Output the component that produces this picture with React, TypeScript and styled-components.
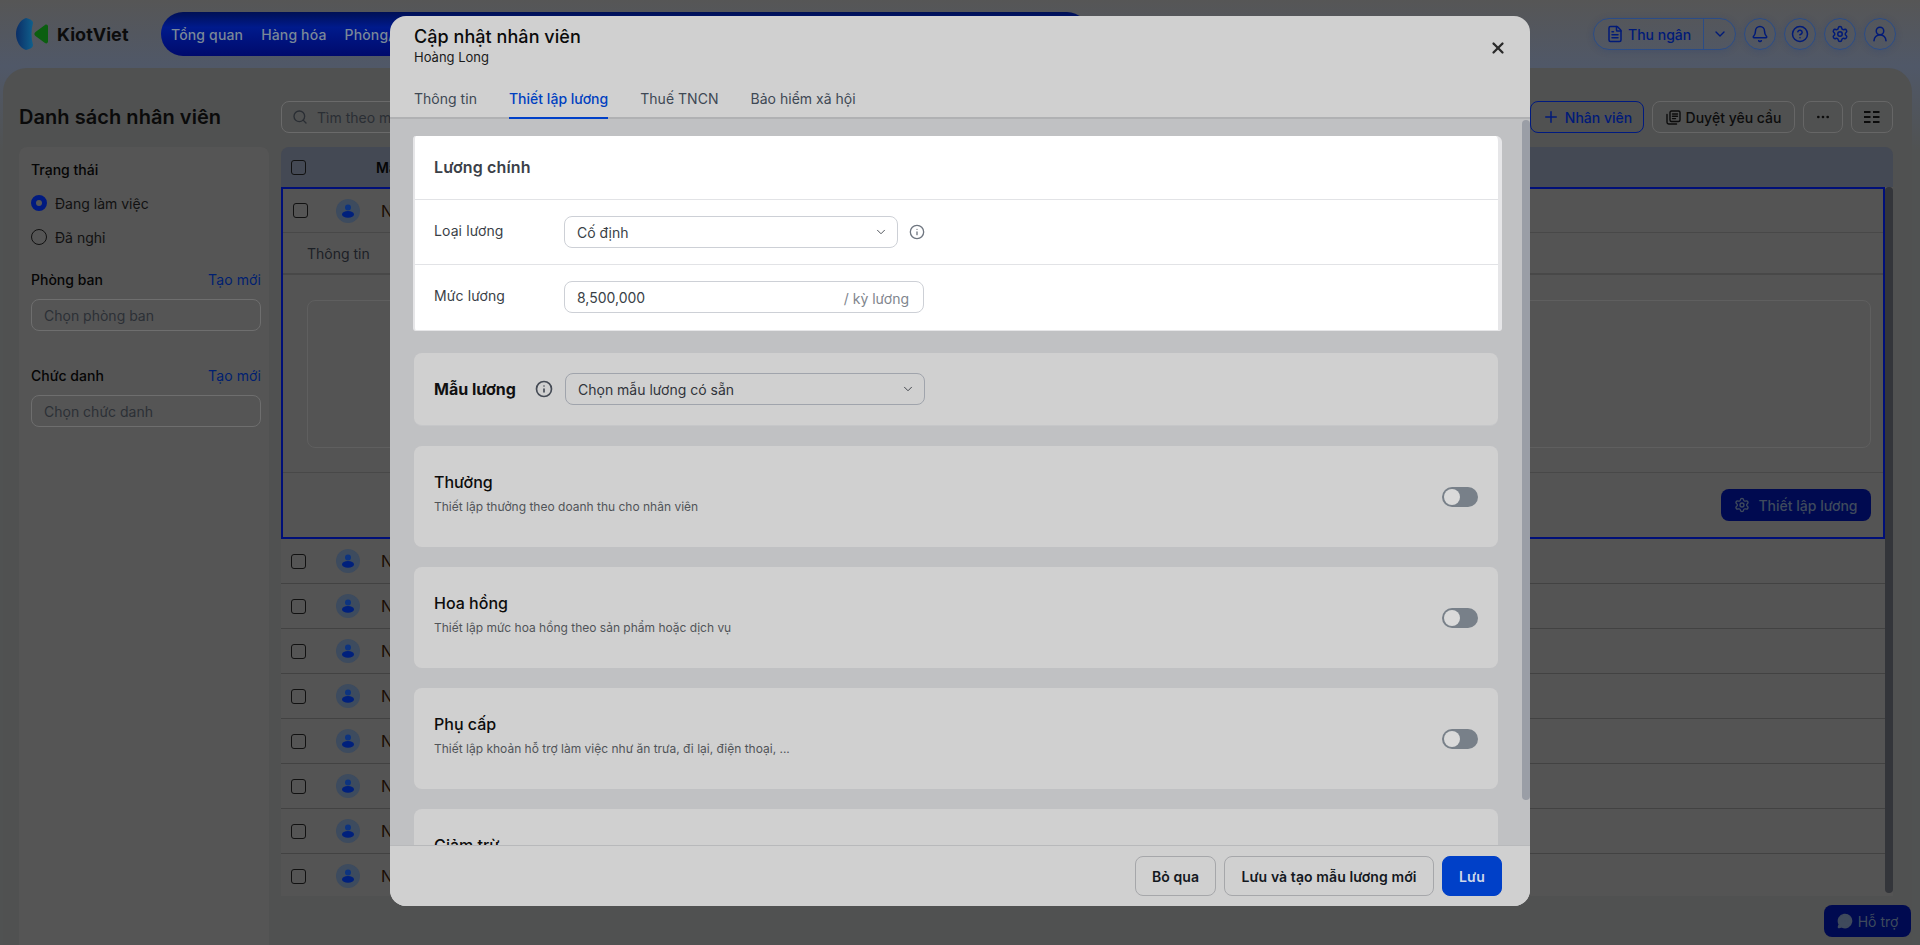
import React from 'react';
import styled, { createGlobalStyle } from 'styled-components';
import {
  Search, Plus, MoreHorizontal, ChevronDown, Bell, CircleHelp, Settings, UserRound, X, Info, FileText, MessageCircleMore,
} from 'lucide-react';

const Global = createGlobalStyle`
  html, body { margin: 0; padding: 0; height: 945px; overflow: hidden; background: #505252; }
  body { font-family: Inter, "Noto Sans", sans-serif; color: #0a0a0a; font-size: 14px; }
  * { box-sizing: border-box; }
`;

const Page = styled.div`
  position: relative;
  width: 1920px;
  height: 945px;
  overflow: hidden;
  display: flex;
  flex-direction: column;
  background: linear-gradient(180deg, #565656 0, #505868 66px, #505252 150px);
`;

const TopBar = styled.header`
  flex: none;
  height: 68px;
  display: flex;
  align-items: flex-start;
  padding: 12px 24px 0 16px;
`;
const Logo = styled.div`
  display: flex;
  align-items: center;
  width: 145px;
  height: 44px;
  gap: 9px;
  font-size: 18px;
  font-weight: 700;
  color: #0c0c0c;
  letter-spacing: 0.05px;
`;
const NavPill = styled.nav`
  width: 928px;
  height: 44px;
  border-radius: 22px;
  background: linear-gradient(180deg, #001055 0, #001a8c 35%, #000a6c 100%);
  display: flex;
  align-items: center;
  gap: 18px;
  padding-left: 10px;
  font-size: 14px;
  font-weight: 500;
  letter-spacing: 0.15px;
  color: #7a8898;
`;
const TopRight = styled.div`
  margin-left: auto;
  margin-top: 6px;
  display: flex;
  align-items: center;
  gap: 8px;
`;
const Cashier = styled.div`
  display: flex;
  height: 32px;
  width: 143px;
  border: 1px solid #2b4c86;
  border-radius: 16px;
  color: #001a78;
  font-size: 14px;
  font-weight: 500;
  box-shadow: 0 1px 6px rgba(30, 60, 120, .25);
`;
const CashierMain = styled.div`
  flex: 1;
  display: flex;
  align-items: center;
  gap: 4px;
  padding-left: 12px;
  border-right: 1px solid #2b4c86;
`;
const CashierArrow = styled.div`
  width: 31px;
  display: flex;
  align-items: center;
  justify-content: center;
`;
const RoundBtn = styled.div`
  width: 32px;
  height: 32px;
  border-radius: 50%;
  border: 1px solid #2b4c86;
  color: #001a78;
  display: flex;
  align-items: center;
  justify-content: center;
  box-shadow: 0 1px 6px rgba(30, 60, 120, .25);
`;

const Panel = styled.main`
  flex: 1;
  min-height: 0;
  margin: 0 8px 0 3px;
  padding: 33px 19px 0 16px;
  background: #505151;
  border-radius: 24px 24px 0 0;
  display: flex;
  flex-direction: column;
`;
const Toolbar = styled.div`
  height: 32px;
  flex: none;
  display: flex;
  align-items: center;
  gap: 8px;
`;
const PageTitle = styled.h1`
  margin: 0;
  width: 254px;
  font-size: 20px;
  line-height: 28px;
  font-weight: 600;
  letter-spacing: 0.05px;
  color: #0a0a0a;
`;
const SearchBox = styled.div`
  flex: 1;
  height: 32px;
  border: 1px solid #6a6a6a;
  border-radius: 8px;
  display: flex;
  align-items: center;
  gap: 9px;
  padding-left: 10px;
  color: #2a2e34;
`;
const ToolBtn = styled.div<{ $w: number; $primary?: boolean }>`
  width: ${p => p.$w}px;
  height: 32px;
  flex: none;
  border: 1px solid ${p => (p.$primary ? '#001a80' : '#666')};
  border-radius: 8px;
  display: flex;
  align-items: center;
  justify-content: center;
  gap: 5px;
  font-size: 14px;
  font-weight: 500;
  color: ${p => (p.$primary ? '#001a78' : '#0c0c0c')};
`;
const Columns = styled.div`
  flex: 1;
  min-height: 0;
  margin-top: 14px;
  display: flex;
  gap: 12px;
`;
const Sidebar = styled.aside`
  width: 250px;
  flex: none;
  padding: 12px 8px 12px 12px;
  border-radius: 8px 8px 0 0;
  background: #555;
  display: flex;
  flex-direction: column;
`;
const FilterHead = styled.div`
  display: flex;
  justify-content: space-between;
  align-items: center;
  height: 20px;
  font-weight: 500;
  font-size: 14px;
  color: #050505;
`;
const CreateLink = styled.span`
  color: #001f70;
  font-weight: 400;
  letter-spacing: 0.1px;
`;
const RadioRow = styled.div`
  display: flex;
  align-items: center;
  gap: 8px;
  height: 20px;
  margin-top: 14px;
  color: #111;
`;
const Radio = styled.span<{ $on?: boolean }>`
  width: 16px;
  height: 16px;
  border-radius: 50%;
  background: ${p => (p.$on ? '#001a80' : 'transparent')};
  border: ${p => (p.$on ? '5px solid #001a80' : '1px solid #111')};
  &::after {
    content: '';
    display: ${p => (p.$on ? 'block' : 'none')};
    width: 6px;
    height: 6px;
    border-radius: 50%;
    background: #555;
  }
`;
const FilterSelect = styled.div`
  height: 32px;
  margin-top: 10px;
  border: 1px solid #6e6e6e;
  border-radius: 8px;
  padding-left: 12px;
  display: flex;
  align-items: center;
  color: #2c3036;
`;
const FilterGroup = styled.div<{ $top: number }>`
  margin-top: ${p => p.$top}px;
`;

const Table = styled.section`
  flex: 1;
  min-width: 0;
  display: flex;
  flex-direction: column;
  height: 749px;
  position: relative;
`;
const TableHead = styled.div`
  height: 40px;
  flex: none;
  background: #444954;
  border-radius: 8px 8px 0 0;
  display: flex;
  align-items: center;
  padding-left: 10px;
  font-weight: 600;
  color: #050505;
`;
const Check = styled.span`
  width: 15px;
  height: 15px;
  flex: none;
  border: 1px solid #111;
  border-radius: 3px;
`;
const ExpandedCheck = styled(Check)`
  margin-right: -2px;
`;
const HeadLabel = styled.span`
  margin-left: 70px;
`;
const TableBody = styled.div`
  flex: 1;
  min-height: 0;
  overflow: hidden;
  position: relative;
  padding-right: 8px;
  display: flex;
  flex-direction: column;
  background: #545454;
`;
const Scroll = styled.div`
  position: absolute;
  top: 0;
  right: 0;
  bottom: 3px;
  width: 8px;
  border-radius: 4px;
  background: #33353a;
`;
const Expanded = styled.div`
  height: 352px;
  flex: none;
  border: 2px solid #000f78;
  display: flex;
  flex-direction: column;
`;
const Row = styled.div<{ $plain?: boolean }>`
  height: ${p => (p.$plain ? 45 : 44)}px;
  flex: none;
  display: flex;
  align-items: center;
  padding-left: 10px;
  border-bottom: 1px solid ${p => (p.$plain ? '#424242' : '#484848')};
  color: #1a0c02;
  font-size: 16px;
`;
const Avatar = styled.span`
  width: 24px;
  height: 24px;
  margin-left: 30px;
  flex: none;
  border-radius: 50%;
  background: #3d4b5e;
  color: #00207c;
  display: flex;
  align-items: center;
  justify-content: center;
`;
const RowCode = styled.span`
  margin-left: 21px;
`;
const InnerTabs = styled.div`
  height: 42px;
  flex: none;
  display: flex;
  align-items: center;
  padding-left: 24px;
  border-bottom: 2px solid #484848;
  color: #1c2026;
`;
const InnerBody = styled.div`
  flex: 1;
  padding: 25px 12px 24px 24px;
  border-bottom: 1px solid #484848;
`;
const Dashed = styled.div`
  height: 100%;
  border: 1px solid #5f5f5f;
  border-radius: 8px;
`;
const InnerFoot = styled.div`
  height: 64px;
  flex: none;
  display: flex;
  align-items: center;
  justify-content: flex-end;
  padding-right: 12px;
`;
const SetupBtn = styled.div`
  width: 150px;
  height: 32px;
  border-radius: 8px;
  background: #000a50;
  color: #3f4a5c;
  display: flex;
  align-items: center;
  justify-content: center;
  gap: 8px;
  font-weight: 500;
`;
const Support = styled.div`
  position: absolute;
  left: 1824px;
  top: 905px;
  width: 87px;
  height: 32px;
  border-radius: 8px;
  background: #000a50;
  color: #3f4a5c;
  display: flex;
  align-items: center;
  justify-content: center;
  gap: 5px;
  font-size: 14px;
`;

const Modal = styled.div`
  position: absolute;
  left: 390px;
  top: 16px;
  width: 1140px;
  height: 890px;
  border-radius: 16px;
  overflow: hidden;
  background: #d0d0d0;
  display: flex;
  flex-direction: column;
`;
const ModalHead = styled.div`
  height: 62px;
  flex: none;
  padding: 8px 24px 0;
  position: relative;
`;
const ModalTitle = styled.h2`
  margin: 0;
  font-size: 18px;
  line-height: 25px;
  font-weight: 500;
  letter-spacing: 0.05px;
  color: #0a0a0a;
`;
const ModalSub = styled.div`
  font-size: 13px;
  line-height: 16px;
  color: #1a1a1a;
`;
const Close = styled.span`
  position: absolute;
  right: 23px;
  top: 23px;
  display: flex;
  color: #2a2a2a;
`;
const Tabs = styled.div`
  height: 41px;
  flex: none;
  display: flex;
  gap: 32px;
  padding: 0 24px;
  border-bottom: 2px solid #b0b1b3;
`;
const Tab = styled.div<{ $on?: boolean }>`
  height: 41px;
  padding-top: 12px;
  font-size: 14px;
  line-height: 18px;
  letter-spacing: 0.02px;
  font-weight: ${p => (p.$on ? 500 : 400)};
  color: ${p => (p.$on ? '#0040c0' : '#3e4854')};
  border-bottom: 2px solid ${p => (p.$on ? '#0040c8' : 'transparent')};
`;
const ModalBody = styled.div`
  flex: 1;
  min-height: 0;
  overflow: hidden;
  background: #c0c1c3;
  padding: 17px 32px 0 24px;
  position: relative;
  display: flex;
  flex-direction: column;
  gap: 20px;
`;
const ModalThumb = styled.div`
  position: absolute;
  right: 0;
  top: 1px;
  width: 8px;
  height: 680px;
  border-radius: 4px;
  background: #9a9ea6;
`;
const MainCard = styled.section`
  flex: none;
  height: 195px;
  margin: 0 -4px 2px -1px;
  background: #fff;
  border-style: solid;
  border-color: #e6e6e8;
  border-width: 0 4px 1px 2px;
  border-radius: 3px 6px 3px 3px;
  display: flex;
  flex-direction: column;
`;
const MainHead = styled.div`
  height: 64px;
  flex: none;
  display: flex;
  align-items: center;
  padding: 0 0 1px 19px;
  font-size: 16px;
  font-weight: 600;
  letter-spacing: 0.15px;
  color: #3b4048;
  border-bottom: 1px solid #e2e3e6;
`;
const MainRow = styled.div<{ $last?: boolean }>`
  height: ${p => (p.$last ? 64 : 65)}px;
  flex: none;
  display: flex;
  align-items: center;
  padding-left: 19px;
  border-bottom: ${p => (p.$last ? 'none' : '1px solid #e2e3e6')};
`;
const FieldLabel = styled.span`
  width: 130px;
  flex: none;
  padding-bottom: 3px;
  color: #3a3f47;
  font-size: 14px;
  letter-spacing: 0.1px;
`;
const Field = styled.div<{ $w: number; $dim?: boolean }>`
  width: ${p => p.$w}px;
  height: 32px;
  flex: none;
  border: 1px solid ${p => (p.$dim ? '#a0a4ac' : '#cdd0d6')};
  border-radius: 8px;
  display: flex;
  align-items: center;
  justify-content: space-between;
  padding: 0 9px 0 12px;
  font-size: 14px;
  color: ${p => (p.$dim ? '#30343b' : '#3a3f47')};
`;
const Unit = styled.span`
  color: #80858d;
  padding: 2px 5px 0 0;
`;
const InfoWrap = styled.span<{ $color: string; $left: number }>`
  display: flex;
  margin-left: ${p => p.$left}px;
  color: ${p => p.$color};
`;
const TemplateCard = styled.section`
  flex: none;
  height: 73px;
  border-radius: 8px;
  background: #d0d0d0;
  border-bottom: 1px solid #c6c7c9;
  display: flex;
  align-items: center;
  padding-left: 20px;
`;
const TemplateLabel = styled.span`
  font-size: 16px;
  font-weight: 700;
  color: #101010;
  width: 101px;
  flex: none;
`;
const SettingCard = styled.section`
  flex: none;
  height: 101px;
  border-radius: 8px;
  background: #d0d0d0;
  padding: 24px 20px 0;
  position: relative;
`;
const SettingTitle = styled.div`
  font-size: 16px;
  line-height: 24px;
  font-weight: 500;
  color: #0c0c0c;
`;
const SettingDesc = styled.div`
  margin-top: 5px;
  font-size: 12px;
  line-height: 16px;
  color: #505458;
`;
const Toggle = styled.span`
  position: absolute;
  right: 20px;
  top: 41px;
  width: 36px;
  height: 20px;
  border-radius: 10px;
  background: #788089;
  padding: 2px;
  display: flex;
  &::before {
    content: '';
    width: 16px;
    height: 16px;
    border-radius: 50%;
    background: #dadada;
  }
`;
const ModalFoot = styled.div`
  height: 61px;
  flex: none;
  border-top: 1px solid #b8b9bb;
  background: #d0d0d0;
  padding: 10px 28px 0 0;
  display: flex;
  justify-content: flex-end;
  gap: 8px;
`;
const FootBtn = styled.div<{ $w: number; $primary?: boolean }>`
  width: ${p => p.$w}px;
  height: 40px;
  border-radius: 8px;
  border: 1px solid ${p => (p.$primary ? '#0040c8' : '#a6a7aa')};
  background: ${p => (p.$primary ? '#0040c8' : 'transparent')};
  color: ${p => (p.$primary ? '#d0d8e8' : '#14181e')};
  display: flex;
  align-items: center;
  justify-content: center;
  font-size: 14px;
  font-weight: 600;
  letter-spacing: 0.1px;
`;

const PersonIcon = () => (
  <svg width="16" height="16" viewBox="0 0 16 16" fill="currentColor">
    <circle cx="8" cy="4.4" r="3" fill="#0d3480" />
    <ellipse cx="8" cy="11.4" rx="6" ry="3.4" />
  </svg>
);
const LogoMark = () => (
  <svg width="32" height="32" viewBox="0 0 32 32">
    <defs>
      <linearGradient id="lg" x1="0" y1="0" x2="1" y2="0">
        <stop offset="0" stopColor="#0b2e66" />
        <stop offset="1" stopColor="#0f5f8c" />
      </linearGradient>
    </defs>
    <path d="M10 0C4 2 0 9 0 16s4 14 10 16c5-1 7-3 7-5C15 20 15 12 17 5 17 3 15 1 10 0Z" fill="url(#lg)" />
    <path d="M32 8.500v15c0 1.500-1.500 2.500-3 1.500L19.500 18c-1.500-1-1.500-3 0-4L29 7c1.500-1 3 0 3 1.500Z" fill="#0b5f10" />
  </svg>
);
const GridIcon = () => (
  <svg width="16" height="14" viewBox="0 0 16 14" fill="#0c0c0c">
    <rect x="0" y="1" width="6.500" height="2" /><rect x="9" y="1" width="6.500" height="2" />
    <rect x="0" y="6" width="6.500" height="2" /><rect x="9" y="6" width="6.500" height="2" />
    <rect x="0" y="11" width="6.500" height="2" /><rect x="9" y="11" width="6.500" height="2" />
  </svg>
);
const ApprovalIcon = () => (
  <svg width="15" height="15" viewBox="0 0 15 15" fill="none" stroke="#0c0c0c" strokeWidth="1.4" strokeLinecap="round" strokeLinejoin="round">
    <rect x="4" y="1" width="10" height="10.500" rx="1.500" />
    <path d="M6.500 4h5M6.500 6.300h5M6.500 8.600h3" />
    <path d="M1 4.500v7.800c0 1 .7 1.700 1.700 1.700h7.800" />
  </svg>
);

const settings = [
  ['Thưởng', 'Thiết lập thưởng theo doanh thu cho nhân viên'],
  ['Hoa hồng', 'Thiết lập mức hoa hồng theo sản phẩm hoặc dịch vụ'],
  ['Phụ cấp', 'Thiết lập khoản hỗ trợ làm việc như ăn trưa, đi lại, điện thoại, ...'],
];

export default function App() {
  return (
    <Page>
      <Global />
      <TopBar>
        <Logo><LogoMark />KiotViet</Logo>
        <NavPill>
          <span>Tổng quan</span>
          <span>Hàng hóa</span>
          <span>Phòng/Bàn</span>
        </NavPill>
        <TopRight>
          <Cashier>
            <CashierMain><FileText size={18} />Thu ngân</CashierMain>
            <CashierArrow><ChevronDown size={16} /></CashierArrow>
          </Cashier>
          <RoundBtn><Bell size={18} /></RoundBtn>
          <RoundBtn><CircleHelp size={18} /></RoundBtn>
          <RoundBtn><Settings size={18} /></RoundBtn>
          <RoundBtn><UserRound size={18} /></RoundBtn>
        </TopRight>
      </TopBar>
      <Panel>
        <Toolbar>
          <PageTitle>Danh sách nhân viên</PageTitle>
          <SearchBox><Search size={16} />Tìm theo mã, tên nhân viên</SearchBox>
          <ToolBtn $w={114} $primary><Plus size={18} />Nhân viên</ToolBtn>
          <ToolBtn $w={143}><ApprovalIcon />Duyệt yêu cầu</ToolBtn>
          <ToolBtn $w={40}><MoreHorizontal size={16} /></ToolBtn>
          <ToolBtn $w={42}><GridIcon /></ToolBtn>
        </Toolbar>
        <Columns>
          <Sidebar>
            <FilterHead>Trạng thái</FilterHead>
            <RadioRow><Radio $on />Đang làm việc</RadioRow>
            <RadioRow><Radio />Đã nghỉ</RadioRow>
            <FilterGroup $top={22}>
              <FilterHead>Phòng ban<CreateLink>Tạo mới</CreateLink></FilterHead>
              <FilterSelect>Chọn phòng ban</FilterSelect>
            </FilterGroup>
            <FilterGroup $top={34}>
              <FilterHead>Chức danh<CreateLink>Tạo mới</CreateLink></FilterHead>
              <FilterSelect>Chọn chức danh</FilterSelect>
            </FilterGroup>
          </Sidebar>
          <Table>
            <TableHead><Check /><HeadLabel>Mã nhân viên</HeadLabel></TableHead>
            <TableBody>
              <Expanded>
                <Row><ExpandedCheck /><Avatar><PersonIcon /></Avatar><RowCode>NV000001</RowCode></Row>
                <InnerTabs>Thông tin</InnerTabs>
                <InnerBody><Dashed /></InnerBody>
                <InnerFoot><SetupBtn><Settings size={16} />Thiết lập lương</SetupBtn></InnerFoot>
              </Expanded>
              {[2, 3, 4, 5, 6, 7, 8, 9].map(n => (
                <Row key={n} $plain><Check /><Avatar><PersonIcon /></Avatar><RowCode>NV00000{n}</RowCode></Row>
              ))}
              <Scroll />
            </TableBody>
          </Table>
        </Columns>
      </Panel>
      <Support><MessageCircleMore size={16} fill="#3f4a5c" />Hỗ trợ</Support>
      <Modal>
        <ModalHead>
          <ModalTitle>Cập nhật nhân viên</ModalTitle>
          <ModalSub>Hoàng Long</ModalSub>
          <Close><X size={18} strokeWidth={3} /></Close>
        </ModalHead>
        <Tabs>
          <Tab>Thông tin</Tab>
          <Tab $on>Thiết lập lương</Tab>
          <Tab>Thuế TNCN</Tab>
          <Tab>Bảo hiểm xã hội</Tab>
        </Tabs>
        <ModalBody>
          <MainCard>
            <MainHead>Lương chính</MainHead>
            <MainRow>
              <FieldLabel>Loại lương</FieldLabel>
              <Field $w={334}>Cố định<ChevronDown size={14} strokeWidth={1.5} /></Field>
              <InfoWrap $color="#6f7680" $left={11}><Info size={16} /></InfoWrap>
            </MainRow>
            <MainRow $last>
              <FieldLabel>Mức lương</FieldLabel>
              <Field $w={360}>8,500,000<Unit>/ kỳ lương</Unit></Field>
            </MainRow>
          </MainCard>
          <TemplateCard>
            <TemplateLabel>Mẫu lương</TemplateLabel>
            <InfoWrap $color="#454b55" $left={0}><Info size={18} strokeWidth={2.2} /></InfoWrap>
            <InfoWrap $color="#30343b" $left={12}>
              <Field $w={360} $dim>Chọn mẫu lương có sẵn<ChevronDown size={14} strokeWidth={1.5} /></Field>
            </InfoWrap>
          </TemplateCard>
          {settings.map(([t, d]) => (
            <SettingCard key={t}>
              <SettingTitle>{t}</SettingTitle>
              <SettingDesc>{d}</SettingDesc>
              <Toggle />
            </SettingCard>
          ))}
          <SettingCard>
            <SettingTitle>Giảm trừ</SettingTitle>
          </SettingCard>
          <ModalThumb />
        </ModalBody>
        <ModalFoot>
          <FootBtn $w={81}>Bỏ qua</FootBtn>
          <FootBtn $w={210}>Lưu và tạo mẫu lương mới</FootBtn>
          <FootBtn $w={60} $primary>Lưu</FootBtn>
        </ModalFoot>
      </Modal>
    </Page>
  );
}
